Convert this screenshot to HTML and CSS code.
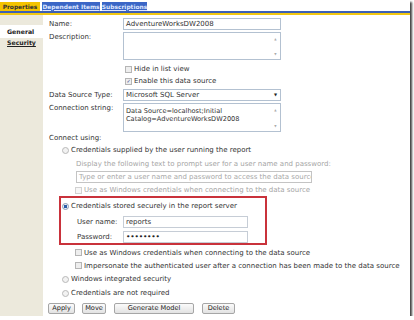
FILE: index.html
```html
<!DOCTYPE html>
<html lang="en">
<head>
    <meta charset="UTF-8">
    <meta name="viewport" content="width=device-width, initial-scale=1.0">
    <title>Data Source Properties</title>
    <link rel="stylesheet" href="styles.css">
</head>
<body>
    <div class="frame">
        <div class="tabs">
            <span class="tab tab-active">Properties</span>
            <span class="tab tab-dep">Dependent Items</span>
            <span class="tab tab-sub">Subscriptions</span>
        </div>
        <div class="tabline"></div>

        <div class="main">
            <div class="side">
                <div class="side-item side-active">General</div>
                <div class="side-item side-link">Security</div>
            </div>

            <div class="content">
                <div class="row row-name">
                    <span class="label">Name:</span>
                    <div class="field">AdventureWorksDW2008</div>
                </div>
                <div class="row row-desc">
                    <span class="label">Description:</span>
                    <div class="field textbox">
                        <div class="tb-text"></div>
                        <div class="scroll"><span>&#9650;</span><span>&#9660;</span></div>
                    </div>
                </div>
                <div class="check-row indent-field">
                    <span class="box"></span>Hide in list view
                </div>
                <div class="check-row indent-field">
                    <span class="box box-checked">&#10003;</span>Enable this data source
                </div>
                <div class="row row-type">
                    <span class="label">Data Source Type:</span>
                    <div class="field select">
                        <span>Microsoft SQL Server</span>
                        <span class="arrow">&#9660;</span>
                    </div>
                </div>
                <div class="row row-conn">
                    <span class="label">Connection string:</span>
                    <div class="field textbox">
                        <div class="tb-text">Data Source=localhost;Initial Catalog=AdventureWorksDW2008</div>
                        <div class="scroll"><span>&#9650;</span><span>&#9660;</span></div>
                    </div>
                </div>

                <div class="connect-label">Connect using:</div>

                <div class="options">
                    <div class="opt">
                        <span class="radio"></span>Credentials supplied by the user running the report
                    </div>
                    <div class="sub sub-text muted">Display the following text to prompt user for a user name and password:</div>
                    <div class="sub">
                        <div class="prompt-box">Type or enter a user name and password to access the data source</div>
                    </div>
                    <div class="sub-check muted">
                        <span class="box box-muted"></span>Use as Windows credentials when connecting to the data source
                    </div>

                    <div class="stored">
                        <div class="opt">
                            <span class="radio radio-on"></span>Credentials stored securely in the report server
                        </div>
                        <div class="cred-row">
                            <span class="cred-label">User name:</span>
                            <div class="cred-field">reports</div>
                        </div>
                        <div class="cred-row">
                            <span class="cred-label">Password:</span>
                            <div class="cred-field dots">&bull;&bull;&bull;&bull;&bull;&bull;&bull;&bull;</div>
                        </div>
                    </div>

                    <div class="sub-check">
                        <span class="box"></span>Use as Windows credentials when connecting to the data source
                    </div>
                    <div class="sub-check">
                        <span class="box"></span>Impersonate the authenticated user after a connection has been made to the data source
                    </div>
                    <div class="opt">
                        <span class="radio"></span>Windows integrated security
                    </div>
                    <div class="opt">
                        <span class="radio"></span>Credentials are not required
                    </div>
                </div>

                <div class="buttons">
                    <button class="btn btn-apply">Apply</button>
                    <button class="btn btn-move">Move</button>
                    <button class="btn btn-gen">Generate Model</button>
                    <button class="btn btn-del">Delete</button>
                </div>
            </div>
        </div>
    </div>
</body>
</html>
```

FILE: styles.css
```css
body {
    margin: 0;
    background: #fff;
    font-family: "DejaVu Sans", Verdana, sans-serif;
    font-size: 7px;
    color: #333;
}
.frame {
    width: 410px;
    height: 316px;
    background: #fff;
    box-shadow: 2px 2px 2px rgba(0, 0, 0, 0.75);
    overflow: hidden;
    display: flex;
    flex-direction: column;
}

/* tabs */
.tabs {
    display: flex;
    gap: 2px;
    padding-top: 2px;
    height: 9px;
}
.tab {
    display: flex;
    align-items: center;
    justify-content: center;
    height: 9px;
    font-size: 5.9px;
    font-weight: bold;
    color: #dfe6ff;
    background: #3b66c6;
    text-decoration: underline;
}
.tab-active {
    width: 40px;
    background: #f4c300;
    color: #333;
    text-decoration: none;
}
.tab-dep {
    width: 58px;
}
.tab-sub {
    width: 45px;
}
.tabline {
    height: 2px;
    background: #3d60b4;
    border-bottom: 2px solid #f2c711;
}

/* layout */
.main {
    flex: 1;
    display: flex;
}
.side {
    width: 43px;
    background: #ece9dc;
    padding-top: 10px;
}
.side-item {
    padding-left: 7px;
    font-weight: bold;
    color: #222;
    font-size: 6.2px;
}
.side-active {
    background: #fff;
    height: 13px;
    line-height: 13px;
}
.side-link {
    height: 10px;
    line-height: 10px;
    text-decoration: underline;
}
.content {
    flex: 1;
    padding-left: 6px;
}

/* form rows */
.row {
    display: flex;
}
.label {
    width: 74px;
    flex-shrink: 0;
}
.field {
    width: 158px;
    box-sizing: border-box;
    border: 1px solid #b3c1d1;
    background: #fff;
    padding: 0 2px;
    color: #333;
}
.row-name {
    margin-top: 3px;
    height: 12px;
    line-height: 10px;
}
.row-name .label {
    line-height: 12px;
}
.row-desc {
    margin-top: 2px;
}
.row-desc .label,
.row-conn .label {
    line-height: 10px;
}
.textbox {
    display: flex;
    height: 28px;
    padding-right: 0;
}
.row-conn {
    margin-top: 2px;
}
.row-conn .textbox {
    height: 29px;
}
.tb-text {
    flex: 1;
    padding-top: 3px;
    line-height: 8px;
    font-size: 6.6px;
}
.scroll {
    width: 9px;
    display: flex;
    flex-direction: column;
    justify-content: space-between;
    align-items: center;
    font-size: 3px;
    color: #aaa;
    padding: 4px 0 3px;
}
.select {
    height: 12px;
    display: flex;
    justify-content: space-between;
    align-items: center;
}
.select .arrow {
    font-size: 4px;
    color: #222;
    padding-right: 1px;
}
.row-type {
    margin-top: 2px;
    line-height: 12px;
}
.check-row {
    height: 12px;
    display: flex;
    align-items: center;
}
.indent-field {
    padding-left: 76px;
}
.row-desc + .check-row {
    margin-top: 3px;
}
.box {
    width: 5px;
    height: 5px;
    border: 1px solid #b5b5b5;
    background: #eee;
    margin-right: 2px;
    flex-shrink: 0;
    font-size: 5px;
    line-height: 5px;
    text-align: center;
    color: #3a4a8a;
}
.box-checked {
    font-weight: bold;
}
.box-muted {
    border-color: #d2d2d2;
    background: #f7f7f7;
}
.connect-label {
    margin-top: 1px;
    height: 10px;
    line-height: 10px;
}

/* credential options */
.options {
    margin-left: 10px;
    width: 350px;
}
.opt {
    height: 14px;
    display: flex;
    align-items: center;
    padding-left: 3px;
    white-space: nowrap;
}
.radio {
    width: 5px;
    height: 5px;
    border: 1px solid #b8b8b8;
    border-radius: 50%;
    background: #f2f2f2;
    margin-right: 2px;
    flex-shrink: 0;
}
.radio-on {
    background: radial-gradient(circle, #2c5ea8 0, #2c5ea8 1.5px, #e8eef6 2px);
    border-color: #8b9cb4;
}
.muted {
    color: #a5a5a5;
}
.sub {
    padding-left: 17px;
}
.sub-text {
    height: 14px;
    line-height: 14px;
    white-space: nowrap;
}
.prompt-box {
    width: 236px;
    height: 12px;
    box-sizing: border-box;
    border: 1px solid #c4c4c4;
    line-height: 10px;
    padding-left: 2px;
    color: #a8a8a8;
    overflow: hidden;
    white-space: nowrap;
}
.sub-check {
    height: 13px;
    display: flex;
    align-items: center;
    padding-left: 16px;
    white-space: nowrap;
}
.options > .sub-check:nth-child(4) {
    height: 12px;
    margin-top: 1px;
}
.stored {
    width: 208px;
    height: 49px;
    box-sizing: border-box;
    border: 2px solid #c9323b;
    padding-top: 1px;
}
.stored .opt {
    padding-left: 1px;
}
.cred-row {
    display: flex;
    align-items: center;
    margin-top: 2px;
    height: 13px;
}
.cred-row + .cred-row {
    margin-top: 2px;
}
.cred-label {
    width: 46px;
    padding-left: 16px;
}
.cred-field {
    width: 125px;
    height: 12px;
    box-sizing: border-box;
    border: 1px solid #c6cdd6;
    line-height: 10px;
    padding-left: 2px;
}
.dots {
    font-size: 7.5px;
    letter-spacing: -0.2px;
    color: #222;
}
.stored + .sub-check {
    margin-top: 1px;
    height: 13px;
}

/* buttons */
.buttons {
    display: flex;
    margin-top: 3px;
    margin-left: -1px;
}
.btn {
    height: 11px;
    padding: 0;
    font-family: "DejaVu Sans", Verdana, sans-serif;
    font-size: 6.6px;
    color: #222;
    border: 1px solid #a6a6a6;
    border-radius: 2px;
    background: linear-gradient(#fbfbfb, #e2e2e2);
    line-height: 9px;
}
.btn-apply {
    width: 27px;
}
.btn-move {
    width: 24px;
    margin-left: 7px;
}
.btn-gen {
    width: 80px;
    margin-left: 8px;
}
.btn-del {
    width: 33px;
    margin-left: 8px;
}
```
